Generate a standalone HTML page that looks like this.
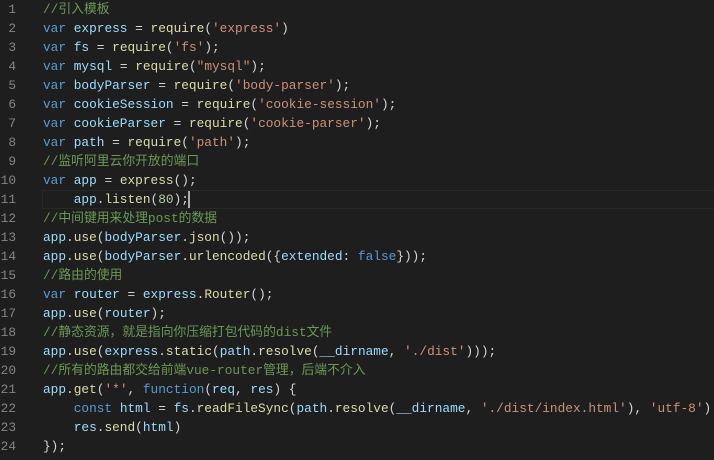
<!DOCTYPE html>
<html><head><meta charset="utf-8"><style>
html,body{margin:0;padding:0;background:#1e1e1e;width:714px;height:460px;overflow:hidden}
.ed{position:relative;font-family:"Liberation Mono","Noto Sans CJK SC",monospace;font-size:12.8px;white-space:pre;color:#d4d4d4}
.l{position:absolute;left:0;height:19px;line-height:19px;width:714px}
.n{position:absolute;left:0;width:16px;text-align:right;color:#858585}
.c{position:absolute;left:43px}
.k{color:#569cd6}.v{color:#9cdcfe}.f{color:#dcdcaa}.s{color:#ce9178}.m{color:#6a9955}.num{color:#b5cea8}
.cur{position:absolute;left:42px;top:190px;width:680px;height:17px;border:1px solid #282828}
.caret{display:inline-block;width:2px;height:17px;background:#aeafad;vertical-align:middle;margin-left:-1px}
</style></head><body><div class="ed">
<div class="cur"></div>
<div class="l" style="top:0"><span class="n">1</span><span class="c"><span class="m">//引入模板</span></span></div>
<div class="l" style="top:19px"><span class="n">2</span><span class="c"><span class="k">var</span> <span class="v">express</span> = <span class="f">require</span>(<span class="s">'express'</span>)</span></div>
<div class="l" style="top:38px"><span class="n">3</span><span class="c"><span class="k">var</span> <span class="v">fs</span> = <span class="f">require</span>(<span class="s">'fs'</span>);</span></div>
<div class="l" style="top:57px"><span class="n">4</span><span class="c"><span class="k">var</span> <span class="v">mysql</span> = <span class="f">require</span>(<span class="s">"mysql"</span>);</span></div>
<div class="l" style="top:76px"><span class="n">5</span><span class="c"><span class="k">var</span> <span class="v">bodyParser</span> = <span class="f">require</span>(<span class="s">'body-parser'</span>);</span></div>
<div class="l" style="top:95px"><span class="n">6</span><span class="c"><span class="k">var</span> <span class="v">cookieSession</span> = <span class="f">require</span>(<span class="s">'cookie-session'</span>);</span></div>
<div class="l" style="top:114px"><span class="n">7</span><span class="c"><span class="k">var</span> <span class="v">cookieParser</span> = <span class="f">require</span>(<span class="s">'cookie-parser'</span>);</span></div>
<div class="l" style="top:133px"><span class="n">8</span><span class="c"><span class="k">var</span> <span class="v">path</span> = <span class="f">require</span>(<span class="s">'path'</span>);</span></div>
<div class="l" style="top:152px"><span class="n">9</span><span class="c"><span class="m">//监听阿里云你开放的端口</span></span></div>
<div class="l" style="top:171px"><span class="n">10</span><span class="c"><span class="k">var</span> <span class="v">app</span> = <span class="f">express</span>();</span></div>
<div class="l" style="top:190px"><span class="n">11</span><span class="c">    <span class="v">app</span>.<span class="f">listen</span>(<span class="num">80</span>);<span class="caret"></span></span></div>
<div class="l" style="top:209px"><span class="n">12</span><span class="c"><span class="m">//中间键用来处理post的数据</span></span></div>
<div class="l" style="top:228px"><span class="n">13</span><span class="c"><span class="v">app</span>.<span class="f">use</span>(<span class="v">bodyParser</span>.<span class="f">json</span>());</span></div>
<div class="l" style="top:247px"><span class="n">14</span><span class="c"><span class="v">app</span>.<span class="f">use</span>(<span class="v">bodyParser</span>.<span class="f">urlencoded</span>({<span class="v">extended</span>: <span class="k">false</span>}));</span></div>
<div class="l" style="top:266px"><span class="n">15</span><span class="c"><span class="m">//路由的使用</span></span></div>
<div class="l" style="top:285px"><span class="n">16</span><span class="c"><span class="k">var</span> <span class="v">router</span> = <span class="v">express</span>.<span class="f">Router</span>();</span></div>
<div class="l" style="top:304px"><span class="n">17</span><span class="c"><span class="v">app</span>.<span class="f">use</span>(<span class="v">router</span>);</span></div>
<div class="l" style="top:323px"><span class="n">18</span><span class="c"><span class="m">//静态资源，就是指向你压缩打包代码的dist文件</span></span></div>
<div class="l" style="top:342px"><span class="n">19</span><span class="c"><span class="v">app</span>.<span class="f">use</span>(<span class="v">express</span>.<span class="f">static</span>(<span class="v">path</span>.<span class="f">resolve</span>(<span class="v">__dirname</span>, <span class="s">'./dist'</span>)));</span></div>
<div class="l" style="top:361px"><span class="n">20</span><span class="c"><span class="m">//所有的路由都交给前端vue-router管理，后端不介入</span></span></div>
<div class="l" style="top:380px"><span class="n">21</span><span class="c"><span class="v">app</span>.<span class="f">get</span>(<span class="s">'*'</span>, <span class="k">function</span>(<span class="v">req</span>, <span class="v">res</span>) {</span></div>
<div class="l" style="top:399px"><span class="n">22</span><span class="c">    <span class="k">const</span> <span class="v">html</span> = <span class="v">fs</span>.<span class="f">readFileSync</span>(<span class="v">path</span>.<span class="f">resolve</span>(<span class="v">__dirname</span>, <span class="s">'./dist/index.html'</span>), <span class="s">'utf-8'</span>)</span></div>
<div class="l" style="top:418px"><span class="n">23</span><span class="c">    <span class="v">res</span>.<span class="f">send</span>(<span class="v">html</span>)</span></div>
<div class="l" style="top:437px"><span class="n">24</span><span class="c">});</span></div>
</div></body></html>
